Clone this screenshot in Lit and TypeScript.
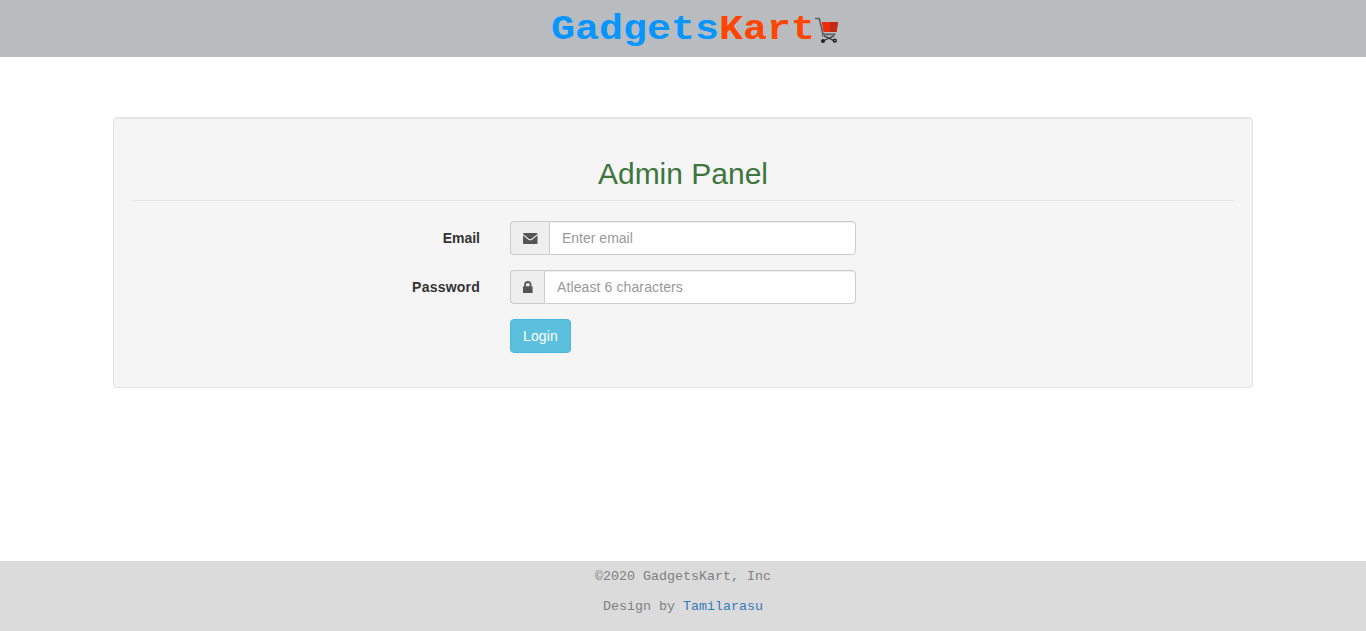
import { LitElement, html, css, svg } from "lit";
import { customElement } from "lit/decorators.js";

const envelope = svg`<rect x="0" y="2" width="14.5" height="11" rx=".9" /><path d="M0 3.6L5.6 8.2Q7.2 9.4 8.8 8.2L14.5 3.6" fill="none" stroke="#eee" stroke-width="1.1" />`;
const lock = svg`<rect x="0" y="6.2" width="9.6" height="6.8" rx=".6" /><path d="M2.1 7V4.6Q2.1 2 4.8 2T7.5 4.6V7" fill="none" stroke="#555" stroke-width="1.8" />`;

@customElement("app-root")
export class AppRoot extends LitElement {
  static styles = css`
    :host {
      display: flex;
      flex-direction: column;
      height: 631px;
      background: #fff;
      color: #333;
      font: 14px/20px "Liberation Sans", Arial, sans-serif;
    }
    * { box-sizing: border-box; }
    .header {
      height: 57px;
      flex: none;
      display: flex;
      justify-content: center;
      background: #b8bcbf;
      padding: 4px 0 0 24px;
    }
    .brand {
      height: 46px;
      font: bold 40px/46px "Courier New", "Liberation Mono", monospace;
      color: #0795ff;
      white-space: nowrap;
      transform: scaleY(0.87);
      transform-origin: 0 100%;
    }
    .kart { color: #ff4500; }
    .cart { width: 24px; height: 28px; margin-top: 13px; flex: none; }
    .main { flex: 1; padding: 60px 113px 0; }
    .well {
      height: 271px;
      padding: 19px;
      border: 1px solid #e3e3e3;
      border-radius: 4px;
      background: #f5f5f5;
      box-shadow: inset 0 1px 1px rgba(0, 0, 0, 0.05);
    }
    .title {
      margin: 0 0 20px;
      padding: 20px 0 9px;
      height: 64px;
      border-bottom: 1px solid #e5e5e5;
      font-size: 30px;
      line-height: 33px;
      font-weight: 400;
      text-align: center;
      color: #3c763d;
    }
    .form {
      display: grid;
      grid-template-columns: 347px 346px;
      grid-auto-rows: 34px;
      gap: 15px 30px;
    }
    .label { text-align: right; font-weight: 700; line-height: 20px; padding-top: 7px; }
    .wide { letter-spacing: 0.22px; }
    .group { display: flex; }
    .addon {
      display: flex;
      align-items: center;
      padding: 0 12px;
      border: 1px solid #ccc;
      border-right: 0;
      border-radius: 4px 0 0 4px;
      background: #eee;
    }
    .icon { height: 14px; fill: #555; display: block; overflow: visible; }
    .mail { width: 14px; }
    .lock { width: 9px; }
    .input {
      flex: 1;
      min-width: 0;
      height: 34px;
      padding: 6px 12px;
      border: 1px solid #ccc;
      border-radius: 0 4px 4px 0;
      background: #fff;
      box-shadow: inset 0 1px 1px rgba(0, 0, 0, 0.075);
      font: inherit;
      color: #555;
    }
    .input::placeholder { color: #999; opacity: 1; }
    .spaced { letter-spacing: 0.11px; }
    .button {
      grid-column: 2;
      justify-self: start;
      width: 61px;
      height: 34px;
      padding: 6px 0;
      border: 1px solid #46b8da;
      border-radius: 4px;
      background: #5bc0de;
      color: #fff;
      font: inherit;
      letter-spacing: 0.12px;
    }
    .footer {
      height: 70px;
      flex: none;
      padding-top: 6px;
      background: #dbdbdb;
      color: #808080;
      text-align: center;
      font: 13.333px/20px "Courier New", "Liberation Mono", monospace;
    }
    .line { margin: 0 0 10px; }
    .link { color: #337ab7; text-decoration: none; }
  `;

  render() {
    return html`
      <header class="header">
        <div class="brand">Gadgets<span class="kart">Kart</span></div>
        <svg class="cart" viewBox="0 0 24 28">
          <path d="M6.8 5H23L21.6 15H8.6Z" fill="#ee2b0a" />
          <path d="M15 5H23L21.6 15H14.5Z" fill="#c22a18" />
          <path d="M0 1.5H4.2L7 12.5L8 17.3H20.5" stroke="#5c5f64" stroke-width="1.7" fill="none" />
          <path d="M7.5 17V20" stroke="#5c5f64" stroke-width="1" />
          <path d="M9 18.8L19.5 23.8M19 18.8L8 24" stroke="#3a3c40" stroke-width="1.3" />
          <circle cx="8" cy="24" r="2.1" fill="#222428" />
          <circle cx="19.8" cy="23.6" r="2.2" fill="#222428" />
          <circle cx="19.9" cy="23.4" r=".7" fill="#aaa" />
        </svg>
      </header>
      <main class="main">
        <section class="well">
          <h2 class="title">Admin Panel</h2>
          <form class="form">
            <label class="label" for="email">Email</label>
            <div class="group">
              <span class="addon"><svg class="icon mail" viewBox="0 0 14 14">${envelope}</svg></span>
              <input class="input" id="email" type="email" placeholder="Enter email" />
            </div>
            <label class="label wide" for="password">Password</label>
            <div class="group">
              <span class="addon"><svg class="icon lock" viewBox="0 0 9 14">${lock}</svg></span>
              <input class="input spaced" id="password" type="password" placeholder="Atleast 6 characters" />
            </div>
            <button class="button" type="button">Login</button>
          </form>
        </section>
      </main>
      <footer class="footer">
        <p class="line">©2020 GadgetsKart, Inc</p>
        <p class="line">Design by <a class="link" href="#">Tamilarasu</a></p>
      </footer>
    `;
  }
}
